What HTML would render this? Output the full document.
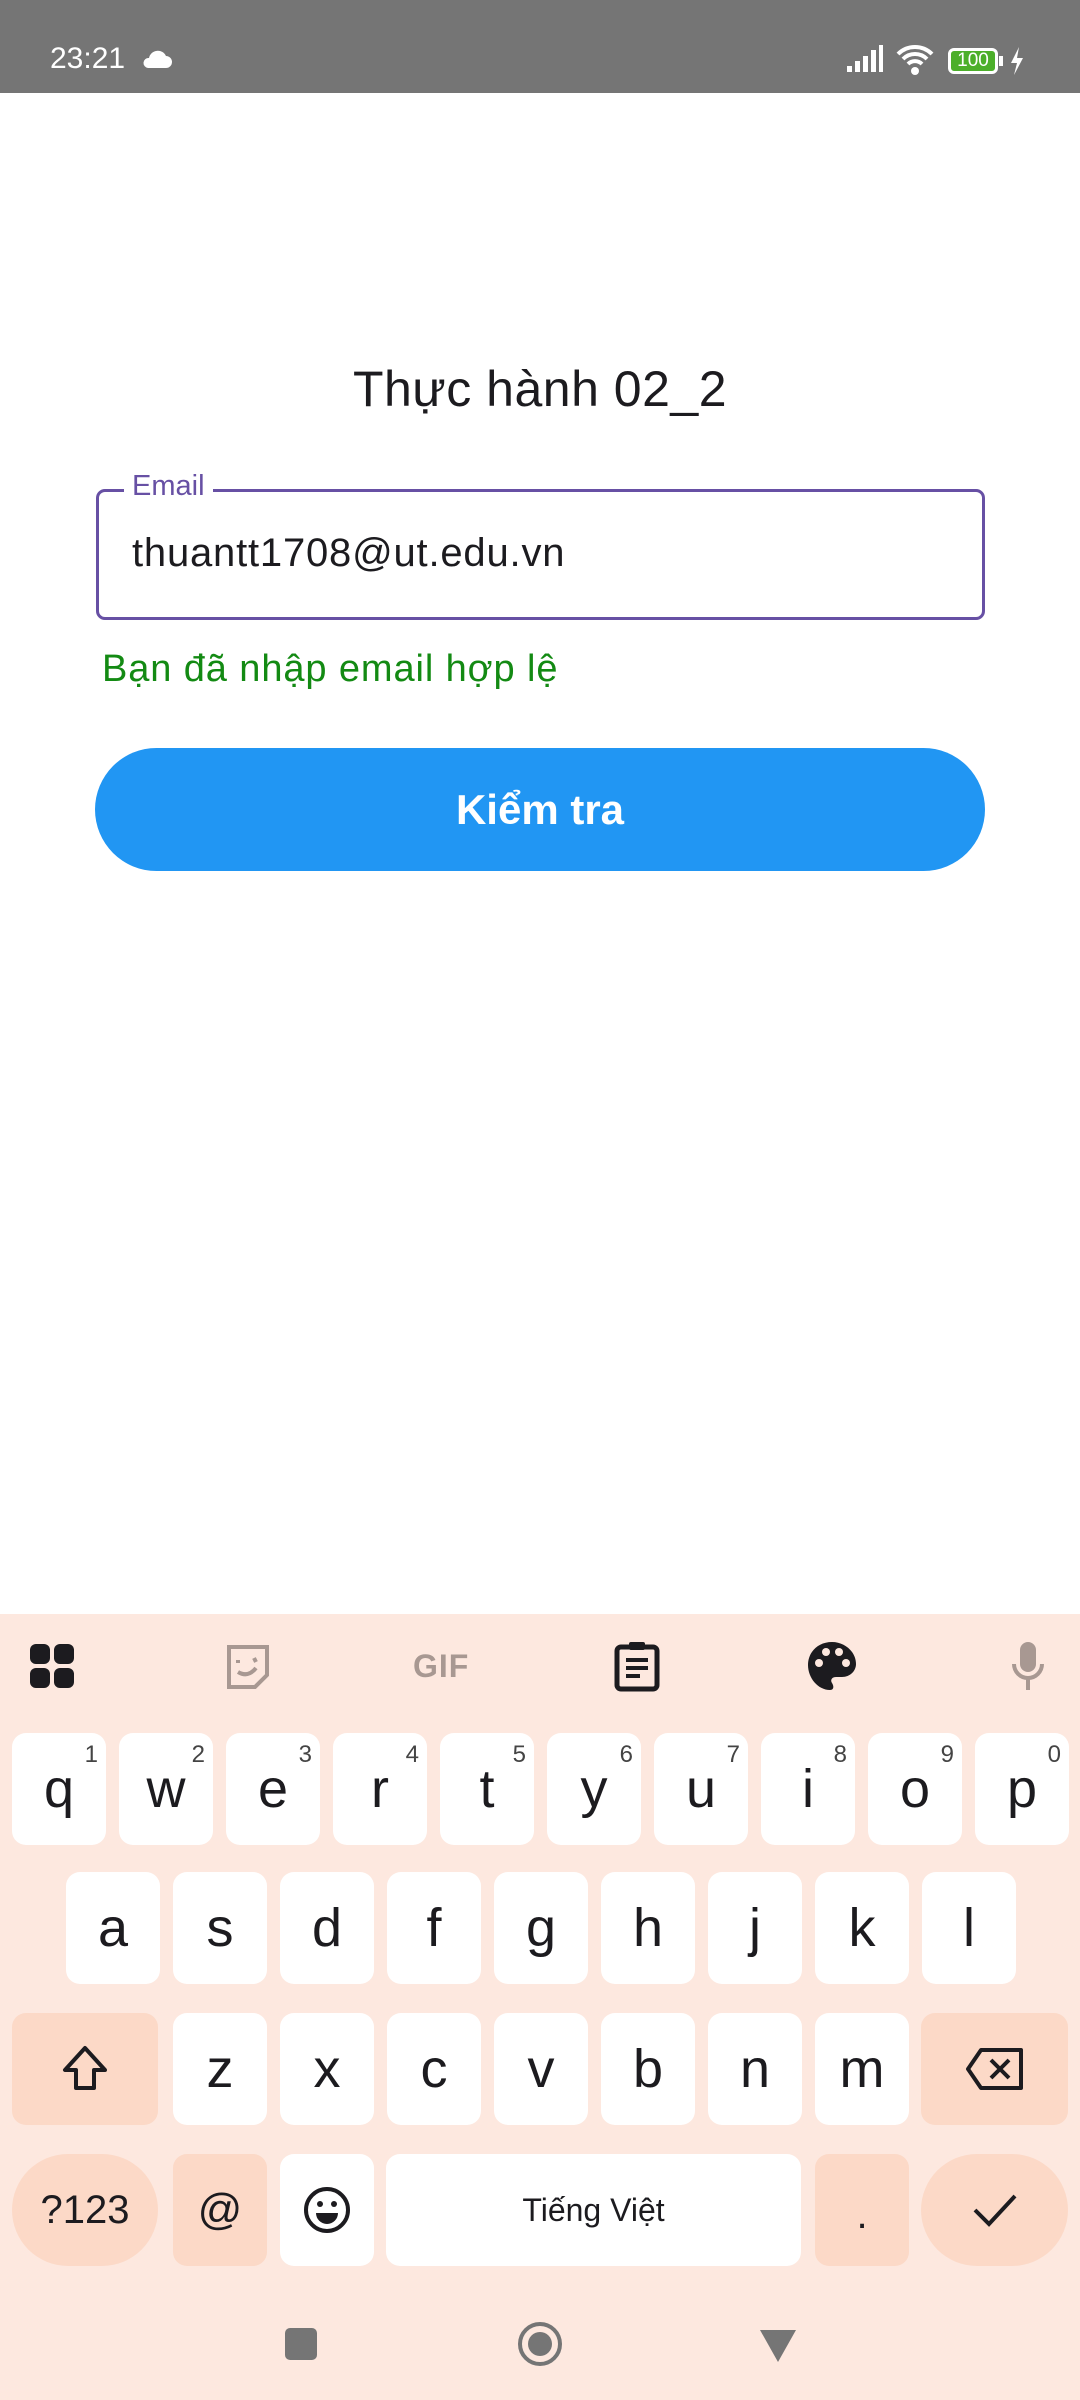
<!DOCTYPE html>
<html><head><meta charset="utf-8"><style>
*{margin:0;padding:0;box-sizing:border-box}
body{width:1080px;height:2400px;background:#fff;font-family:"Liberation Sans",sans-serif;position:relative;overflow:hidden}
.abs{position:absolute}
.sb{left:0;top:0;width:1080px;height:93px;background:#757575;color:#fff}
.kb{left:0;top:1614px;width:1080px;height:786px;background:#fde8df}
.k{position:absolute;background:#fff;border-radius:14px;display:flex;align-items:center;justify-content:center;font-size:54px;color:#1c1b1f;width:94px;height:112px}
.k sup{position:absolute;right:8px;top:8px;font-size:24px;color:#444}
.s{background:#fcd9c7}
</style></head><body>
<div class="abs sb">
 <div class="abs" style="left:50px;top:42px;font-size:30px">23:21</div>
 <svg class="abs" style="left:140px;top:48px" width="32" height="22" viewBox="0 0 32 22"><path d="M8 20h18a6 6 0 0 0 0-12 9 9 0 0 0-17 2 5 5 0 0 0-1 10z" fill="#fff"/></svg>
 <svg class="abs" style="left:845px;top:44px" width="40" height="30" viewBox="0 0 40 30"><rect x="2" y="22" width="5" height="6" fill="#fff"/><rect x="10" y="17" width="5" height="11" fill="#fff"/><rect x="18" y="12" width="5" height="16" fill="#fff"/><rect x="26" y="6" width="5" height="22" fill="#fff"/><rect x="34" y="1" width="4" height="27" fill="#fff"/></svg>
 <svg class="abs" style="left:896px;top:42px" width="38" height="34" viewBox="0 0 38 34"><path d="M2 12a24 24 0 0 1 34 0M7 17a17 17 0 0 1 24 0M12 22a10 10 0 0 1 14 0" stroke="#fff" stroke-width="4" fill="none"/><circle cx="19" cy="29" r="4" fill="#fff"/></svg>
 <div class="abs" style="left:948px;top:48px;width:50px;height:26px;border:3px solid #fff;border-radius:6px;background:#4caf2a;font-size:19px;text-align:center;line-height:20px">100</div>
 <div class="abs" style="left:999px;top:56px;width:4px;height:10px;background:#fff"></div>
 <svg class="abs" style="left:1008px;top:46px" width="16" height="30" viewBox="0 0 16 30"><path d="M11 1L3 17h6l-3 12 9-17H9z" fill="#fff"/></svg>
</div>

<div class="abs" style="left:0;width:1080px;top:360px;text-align:center;font-size:50px;letter-spacing:0.5px;color:#1c1b1f">Thực hành 02_2</div>
<div class="abs" style="left:96px;top:489px;width:889px;height:131px;border:3px solid #6750a4;border-radius:9px"></div>
<div class="abs" style="left:124px;top:470px;padding:0 8px;background:#fff;font-size:29px;color:#6750a4">Email</div>
<div class="abs" style="left:132px;top:531px;font-size:40px;letter-spacing:0.8px;color:#1c1b1f">thuantt1708@ut.edu.vn</div>
<div class="abs" style="left:102px;top:648px;font-size:38px;letter-spacing:0.9px;color:#138a13">Bạn đã nhập email hợp lệ</div>
<div class="abs" style="left:95px;top:748px;width:890px;height:123px;border-radius:62px;background:#2196f3;color:#fff;font-size:42px;font-weight:bold;display:flex;align-items:center;justify-content:center">Kiểm tra</div>

<div class="abs kb">
 <svg class="abs" style="left:30px;top:30px" width="46" height="46" viewBox="0 0 46 46" fill="#1c1b1f"><rect x="0" y="0" width="20" height="20" rx="6"/><rect x="24" y="0" width="20" height="20" rx="6"/><rect x="0" y="24" width="20" height="20" rx="6"/><rect x="24" y="24" width="20" height="20" rx="6"/></svg>
 <svg class="abs" style="left:226px;top:30px" width="44" height="46" viewBox="0 0 44 46"><path d="M3 3h38v28l-12 12H3z" fill="none" stroke="#a89892" stroke-width="4"/><path d="M12 16v3M28 14l2 4M12 28q10 6 18-4" stroke="#a89892" stroke-width="4" fill="none"/></svg>
 <div class="abs" style="left:413px;top:34px;font-size:32px;font-weight:bold;color:#a89892;letter-spacing:1px">GIF</div>
 <svg class="abs" style="left:614px;top:26px" width="46" height="52" viewBox="0 0 46 52"><rect x="3" y="7" width="40" height="42" rx="4" fill="none" stroke="#1c1b1f" stroke-width="5"/><rect x="15" y="2" width="16" height="8" rx="2" fill="#1c1b1f"/><path d="M12 20h22M12 28h22M12 36h14" stroke="#1c1b1f" stroke-width="4"/></svg>
 <svg class="abs" style="left:806px;top:26px" width="52" height="52" viewBox="0 0 52 52"><path d="M26 2C12 2 2 12 2 25c0 13 10 25 22 25 4 0 4-4 2-7-2-3 0-6 4-6h6c8 0 14-6 14-13C50 12 39 2 26 2z" fill="#1c1b1f"/><circle cx="13" cy="23" r="4" fill="#fde8df"/><circle cx="20" cy="12" r="4" fill="#fde8df"/><circle cx="33" cy="12" r="4" fill="#fde8df"/><circle cx="40" cy="23" r="4" fill="#fde8df"/></svg>
 <svg class="abs" style="left:1010px;top:26px" width="36" height="52" viewBox="0 0 36 52"><rect x="10" y="2" width="16" height="30" rx="8" fill="#a89892"/><path d="M4 24a14 14 0 0 0 28 0M18 38v12" stroke="#a89892" stroke-width="4" fill="none"/></svg>

 <div class="k" style="left:12px;top:119px">q<sup>1</sup></div>
 <div class="k" style="left:119px;top:119px">w<sup>2</sup></div>
 <div class="k" style="left:226px;top:119px">e<sup>3</sup></div>
 <div class="k" style="left:333px;top:119px">r<sup>4</sup></div>
 <div class="k" style="left:440px;top:119px">t<sup>5</sup></div>
 <div class="k" style="left:547px;top:119px">y<sup>6</sup></div>
 <div class="k" style="left:654px;top:119px">u<sup>7</sup></div>
 <div class="k" style="left:761px;top:119px">i<sup>8</sup></div>
 <div class="k" style="left:868px;top:119px">o<sup>9</sup></div>
 <div class="k" style="left:975px;top:119px">p<sup>0</sup></div>

 <div class="k" style="left:66px;top:258px">a</div>
 <div class="k" style="left:173px;top:258px">s</div>
 <div class="k" style="left:280px;top:258px">d</div>
 <div class="k" style="left:387px;top:258px">f</div>
 <div class="k" style="left:494px;top:258px">g</div>
 <div class="k" style="left:601px;top:258px">h</div>
 <div class="k" style="left:708px;top:258px">j</div>
 <div class="k" style="left:815px;top:258px">k</div>
 <div class="k" style="left:922px;top:258px">l</div>

 <div class="k s" style="left:12px;top:399px;width:146px"><svg width="50" height="50" viewBox="0 0 50 50"><path d="M25 4L5 26h11v18h18V26h11z" fill="none" stroke="#1c1b1f" stroke-width="4" stroke-linejoin="round"/></svg></div>
 <div class="k" style="left:173px;top:399px">z</div>
 <div class="k" style="left:280px;top:399px">x</div>
 <div class="k" style="left:387px;top:399px">c</div>
 <div class="k" style="left:494px;top:399px">v</div>
 <div class="k" style="left:601px;top:399px">b</div>
 <div class="k" style="left:708px;top:399px">n</div>
 <div class="k" style="left:815px;top:399px">m</div>
 <div class="k s" style="left:921px;top:399px;width:147px"><svg width="60" height="44" viewBox="0 0 60 44"><path d="M16 3h40v38H16L3 22z" fill="none" stroke="#1c1b1f" stroke-width="4" stroke-linejoin="round"/><path d="M26 13l18 18M44 13L26 31" stroke="#1c1b1f" stroke-width="4"/></svg></div>

 <div class="k s" style="left:12px;top:540px;width:146px;border-radius:56px;font-size:40px">?123</div>
 <div class="k s" style="left:173px;top:540px;font-size:44px">@</div>
 <div class="k" style="left:280px;top:540px"><svg width="48" height="48" viewBox="0 0 48 48"><circle cx="24" cy="24" r="21" fill="none" stroke="#1c1b1f" stroke-width="4"/><circle cx="17" cy="18" r="3" fill="#1c1b1f"/><circle cx="31" cy="18" r="3" fill="#1c1b1f"/><path d="M13 27h22a11 11 0 0 1-22 0z" fill="#1c1b1f"/></svg></div>
 <div class="k" style="left:386px;top:540px;width:415px;font-size:32px">Tiếng Việt</div>
 <div class="k s" style="left:815px;top:540px;font-size:40px;align-items:flex-end;padding-bottom:28px">.</div>
 <div class="k s" style="left:921px;top:540px;width:147px;border-radius:56px"><svg width="48" height="40" viewBox="0 0 48 40"><path d="M4 20l14 14L44 6" fill="none" stroke="#1c1b1f" stroke-width="4"/></svg></div>

 <div class="abs" style="left:285px;top:714px;width:32px;height:32px;border-radius:5px;background:#757575"></div>
 <div class="abs" style="left:518px;top:708px;width:44px;height:44px;border-radius:50%;border:4px solid #757575"></div>
 <div class="abs" style="left:528px;top:718px;width:24px;height:24px;border-radius:50%;background:#757575"></div>
 <svg class="abs" style="left:758px;top:714px" width="40" height="36" viewBox="0 0 40 36"><path d="M2 2h36L20 34z" fill="#757575"/></svg>
</div>
</body></html>
